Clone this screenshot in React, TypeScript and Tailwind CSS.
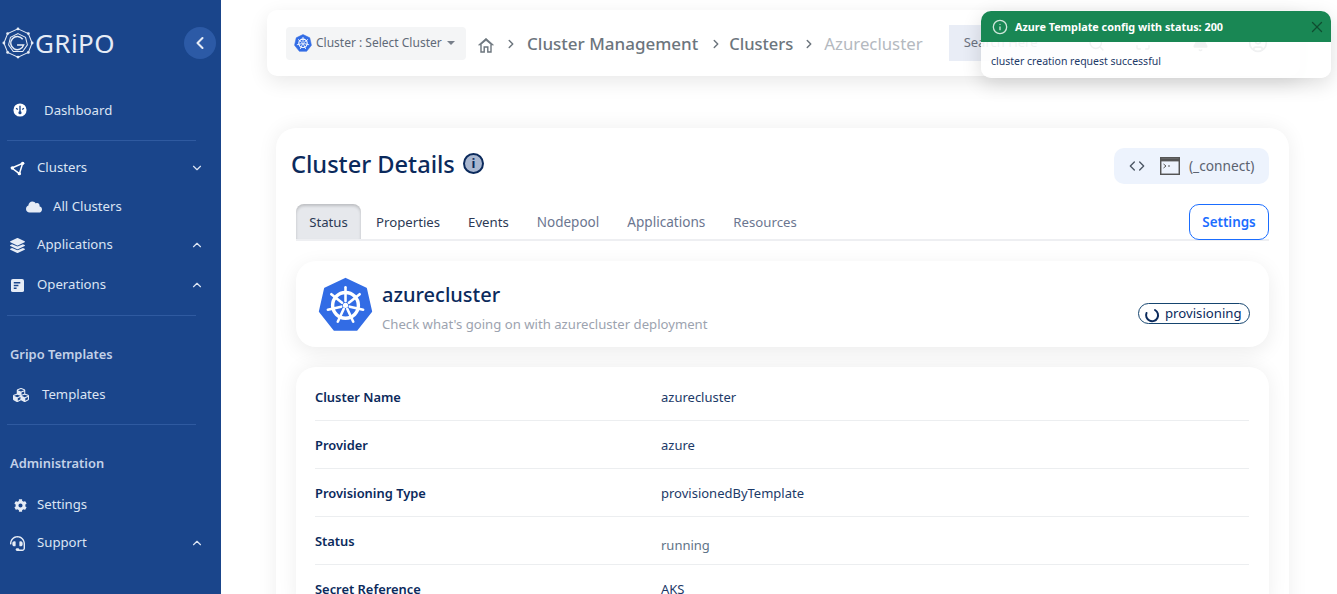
import { Search, Maximize, Bell, CircleUser, ChevronDown, ChevronUp, ChevronLeft, ChevronRight, X, Info, Code } from 'lucide-react';
import { FaCloud, FaCog, FaCubes, FaHeadset, FaLayerGroup } from 'react-icons/fa';

const KubeIcon = ({ className }: { className: string }) => (
    <svg viewBox="0 0 64 64" className={className}>
        <path d="M32 2 L56 13.5 L62 40 L45 61.5 L19 61.5 L2 40 L8 13.5 Z" fill="#326ce5" stroke="#326ce5" strokeWidth="2" strokeLinejoin="round" />
        <circle cx="32" cy="33" r="15" fill="none" stroke="#fff" strokeWidth="4" />
        <circle cx="32" cy="33" r="3" fill="#fff" />
        <g stroke="#fff" strokeWidth="3" strokeLinecap="round">
            <path d="M32 12 V28" />
            <path d="M48.5 20 L36 30" />
            <path d="M52.5 38 L37 34.5" />
            <path d="M41 52 L34 37" />
            <path d="M23 52 L30 37" />
            <path d="M11.5 38 L27 34.5" />
            <path d="M15.5 20 L28 30" />
        </g>
    </svg>
);

const GripoLogo = () => (
    <svg viewBox="0 0 34 34" className="w-[32px] h-[32px] shrink-0" fill="none" stroke="#e6ecf6" strokeWidth="1.1">
        <path d="M17 2 L28 7 L32 17 L28 27 L17 32 L6 27 L2 17 L6 7 Z" />
        <path d="M17 7 L25 11 L27 19 L22 26 L12 26 L7 19 L9 11 Z" />
        <path d="M22 13 A7 7 0 1 0 23 19 H16" strokeWidth="1.6" />
        {[[17, 2], [28, 7], [32, 17], [28, 27], [17, 32], [6, 27], [2, 17], [6, 7]].map(([x, y]) => (
            <circle key={`${x}-${y}`} cx={x} cy={y} r="1.5" fill="#e6ecf6" stroke="none" />
        ))}
    </svg>
);

const DashIcon = () => (
    <svg viewBox="0 0 16 16" className="w-[14px] h-[14px] shrink-0 -mt-[2px]">
        <circle cx="8" cy="8" r="7.5" fill="#fff" />
        <path d="M8 3 V10" stroke="#1a458b" strokeWidth="1.6" />
        <path d="M3.5 6 L5.5 7.5 M12.5 6 L10.5 7.5" stroke="#1a458b" strokeWidth="1.4" />
        <circle cx="8" cy="11" r="1.8" fill="#1a458b" />
    </svg>
);

const ClusterIcon = () => (
    <svg viewBox="0 0 16 16" className="w-[15px] h-[15px]" fill="none" stroke="#fff" strokeWidth="1.6">
        <path d="M2 7.5 L13.5 2.5 L10 13.5 Z" />
        <circle cx="2.5" cy="7.5" r="1.8" fill="#fff" stroke="none" />
        <circle cx="13.5" cy="2.5" r="1.8" fill="#fff" stroke="none" />
        <circle cx="10" cy="13.5" r="1.8" fill="#fff" stroke="none" />
    </svg>
);

const OperationsIcon = () => (
    <svg viewBox="0 0 14 14" className="w-[13px] h-[13px]">
        <rect width="14" height="14" rx="2" fill="#e6ecf6" />
        <path d="M3 4 H10 M3 7 H8 M3 10 H6" stroke="#1a458b" strokeWidth="1.5" />
    </svg>
);

const HomeIcon = () => (
    <svg viewBox="0 0 16 16" className="ml-[12px] mt-[3px] w-[16px] h-[16px] shrink-0" fill="none" stroke="#6c757d">
        <path d="M0.5 8 L8 1.2 L15.5 8 L13.5 8 L8 3.4 L2.5 8 Z" fill="#6c757d" strokeWidth="0.6" />
        <path d="M3 7.5 V15 H6.2 V10 H9.8 V15 H13 V7.5" strokeWidth="1.4" />
    </svg>
);

const Divider = () => <div className="h-px bg-[#2f5aa0] ml-[4px] w-[189px]" />;

function NavRow({ icon, label, chevron, pl, gap, h }: { icon: React.ReactNode; label: string; chevron?: 'up' | 'down'; pl: string; gap: string; h: string }) {
    return (
        <div className={`flex items-center ${pl} ${gap} ${h} text-[13.2px] text-[#dbe4f3] pr-[14px]`}>
            <span className="w-[16px] flex justify-center shrink-0">{icon}</span>
            <span>{label}</span>
            {chevron === 'down' && <ChevronDown className="ml-auto w-[14px] h-[14px] text-[#dbe4f3]" />}
            {chevron === 'up' && <ChevronUp className="ml-auto w-[14px] h-[14px] text-[#dbe4f3]" />}
        </div>
    );
}

const tabs = [
    { name: 'Properties', color: 'text-[#2c3a55]' },
    { name: 'Events', color: 'text-[#2c3a55]' },
    { name: 'Nodepool', color: 'text-[#6b7690] text-[13.5px]' },
    { name: 'Applications', color: 'text-[#6b7690] text-[13.6px]' },
    { name: 'Resources', color: 'text-[#6b7690] text-[13.2px]' },
];

const rows = [
    { label: 'Cluster Name', value: 'azurecluster' },
    { label: 'Provider', value: 'azure' },
    { label: 'Provisioning Type', value: 'provisionedByTemplate' },
    { label: 'Status', value: 'running' },
    { label: 'Secret Reference', value: 'AKS' },
];

export default function App() {
    return (
        <div className="relative flex h-[594px] w-[1337px] overflow-hidden bg-white font-['Noto_Sans',sans-serif]">
            {/* Sidebar */}
            <aside className="w-[221px] shrink-0 bg-[#1a458b] flex flex-col px-[3px]">
                <div className="flex items-center h-[32px] mt-[27px] -ml-[1px]">
                    <GripoLogo />
                    <span className="text-[26px] leading-none text-[#e6ecf6] tracking-[0.4px] ml-[1px]">GRiPO</span>
                    <span className="ml-auto mr-[2px] w-[32px] h-[32px] rounded-full bg-[#2c5aa6] flex items-center justify-center">
                        <ChevronLeft className="w-[20px] h-[20px] text-[#e6ecf6]" strokeWidth={2.5} />
                    </span>
                </div>
                <div className="mt-[33px] flex items-center h-[38px] pl-[10px] text-[13.2px] text-[#dbe4f3]">
                    <DashIcon />
                    <span className="ml-[17px]">Dashboard</span>
                </div>
                <div className="mt-[10px]"><Divider /></div>
                <div className="mt-[8px]">
                    <NavRow icon={<ClusterIcon />} label="Clusters" chevron="down" pl="pl-[6px]" gap="gap-[12px]" h="h-[38px]" />
                    <NavRow icon={<FaCloud className="w-[16px] h-[16px] text-[#e6ecf6]" />} label="All Clusters" pl="pl-[23px]" gap="gap-[11px]" h="h-[39px]" />
                    <NavRow icon={<FaLayerGroup className="w-[15px] h-[15px] text-[#e6ecf6]" />} label="Applications" chevron="up" pl="pl-[6px]" gap="gap-[12px]" h="h-[38px]" />
                    <NavRow icon={<OperationsIcon />} label="Operations" chevron="up" pl="pl-[6px]" gap="gap-[12px]" h="h-[42px]" />
                </div>
                <div className="mt-[9px]"><Divider /></div>
                <div className="mt-[29px] pl-[7px] h-[18px] leading-[18px] text-[12.9px] font-semibold text-[#c3d1e8]">Gripo Templates</div>
                <div className="mt-[13px] flex items-center h-[38px] pl-[10px] text-[13.2px] text-[#dbe4f3]">
                    <FaCubes className="w-[16px] h-[16px] shrink-0 text-[#e6ecf6]" />
                    <span className="ml-[13px]">Templates</span>
                </div>
                <div className="mt-[10px]"><Divider /></div>
                <div className="mt-[29px] pl-[7px] h-[18px] leading-[18px] text-[12.9px] font-semibold text-[#c3d1e8]">Administration</div>
                <div className="mt-[14px] flex items-center h-[38px] pl-[11px] text-[13.2px] text-[#dbe4f3]">
                    <FaCog className="w-[13px] h-[13px] shrink-0 text-[#e6ecf6]" />
                    <span className="ml-[10px]">Settings</span>
                </div>
                <NavRow icon={<FaHeadset className="w-[15px] h-[15px] text-[#e6ecf6]" />} label="Support" chevron="up" pl="pl-[6px]" gap="gap-[12px]" h="h-[38px]" />
            </aside>

            {/* Main */}
            <main className="flex-1 min-w-0 pl-[46px] pr-[37px] pt-[10px]">
                {/* Top bar */}
                <header className="h-[66px] bg-white rounded-[10px] shadow-[0_6px_20px_rgba(0,0,0,0.09)] flex items-center pl-[19px]">
                    <div className="h-[33px] w-[180px] shrink-0 rounded-[4px] bg-[#f4f5f6] flex items-center pl-[8px] text-[12px] text-[#5f6a78]">
                        <KubeIcon className="w-[18px] h-[18px] shrink-0" />
                        <span className="ml-[4px]">Cluster : Select Cluster</span>
                        <span className="ml-[5px] w-0 h-0 border-x-[4px] border-x-transparent border-t-[4px] border-t-[#777f8a]" />
                    </div>
                    <HomeIcon />
                    <ChevronRight className="ml-[10px] mt-[2px] w-[14px] h-[14px] shrink-0 text-[#6c757d]" strokeWidth={2.5} />
                    <span className="ml-[9px] mt-[2px] text-[17px] font-medium text-[#6c757d] whitespace-nowrap">Cluster Management</span>
                    <ChevronRight className="ml-[11px] mt-[2px] w-[14px] h-[14px] shrink-0 text-[#6c757d]" strokeWidth={2.5} />
                    <span className="ml-[6px] mt-[2px] text-[16.5px] font-medium text-[#6c757d]">Clusters</span>
                    <ChevronRight className="ml-[9px] mt-[2px] w-[14px] h-[14px] shrink-0 text-[#6c757d]" strokeWidth={2.5} />
                    <span className="ml-[8px] mt-[2px] text-[16.8px] text-[#b4b9bf]">Azurecluster</span>
                    <div className="ml-[26px] h-[36px] w-[131px] shrink-0 bg-[#e9edf6] flex items-center pl-[15px] text-[13px] text-[#6b7280]">Search Here</div>
                    <Search className="ml-[8px] w-[17px] h-[17px] shrink-0 text-[#6c757d]" />
                    <Maximize className="ml-[30px] w-[16px] h-[16px] shrink-0 text-[#6c757d]" />
                    <Bell className="ml-[41px] w-[17px] h-[17px] shrink-0 text-[#6c757d] fill-[#6c757d]" />
                    <CircleUser className="ml-[39px] w-[20px] h-[20px] shrink-0 text-[#6c757d]" />
                </header>

                {/* Details card */}
                <section className="mt-[52px] ml-[9px] mr-[11px] h-[600px] bg-white rounded-[20px] shadow-[0_0_20px_rgba(0,0,0,0.07)] px-[20px]">
                    <div className="flex items-start pt-[20px] -ml-[5px]">
                        <h1 className="text-[23.6px] leading-[33px] font-medium text-[#0b2a5c]">Cluster Details</h1>
                        <span className="ml-[8px] mt-[5px] w-[21px] h-[21px] rounded-full border-2 border-[#0b2a5c] bg-[#a9b7d0] flex items-center justify-center text-[13px] font-bold leading-none text-[#0b2a5c]">i</span>
                        <div className="ml-auto h-[36px] w-[155px] rounded-[10px] bg-[#edf3fd] flex items-center pl-[15px] text-[13.7px] text-[#5b6270]">
                            <Code className="w-[16px] h-[16px] text-[#4b5563]" />
                            <svg viewBox="0 0 20 18" className="ml-[15px] w-[20px] h-[18px]" fill="none" stroke="#555" strokeWidth="1.5">
                                <rect x="0.7" y="0.7" width="18.6" height="16.6" />
                                <path d="M0.7 2.8 H19.3" strokeWidth="3.2" />
                                <path d="M3.5 7 L6 9 L3.5 11 M8 9 H10" strokeWidth="1" />
                            </svg>
                            <span className="ml-[9px]">(_connect)</span>
                        </div>
                    </div>

                    <div className="mt-[20px] h-[37px] border-b-2 border-[#eeeff2] flex items-stretch text-[13.2px]">
                        <div className="w-[65px] rounded-t-[8px] bg-[#e6e8ec] shadow-[inset_0_2px_3px_rgba(0,0,0,0.18)] flex items-center justify-center pt-[2px] text-[#2c3a55]">Status</div>
                        <div className="flex items-center pl-[15px] pt-[2px] gap-[28px]">
                            {tabs.map((tab) => (
                                <span key={tab.name} className={tab.color}>{tab.name}</span>
                            ))}
                        </div>
                        <button className="ml-auto w-[80px] h-[36px] rounded-[10px] border border-[#1a6dff] text-[#1a6dff] font-semibold bg-white text-[13.4px]">Settings</button>
                    </div>

                    <div className="mt-[20px] h-[86px] rounded-[20px] bg-white shadow-[0_5px_20px_rgba(0,0,0,0.08)] flex items-center pl-[22px] pr-[19px]">
                        <KubeIcon className="w-[55px] h-[55px] shrink-0" />
                        <div className="ml-[9px] mt-[6px]">
                            <div className="text-[20px] leading-[27px] font-medium text-[#0b2a5c]">azurecluster</div>
                            <div className="mt-[7px] text-[13.15px] leading-[18px] text-[#9ca3af]">Check what's going on with azurecluster deployment</div>
                        </div>
                        <div className="ml-auto mt-[18px] h-[21px] w-[112px] rounded-full border border-[#16456f] flex items-center pl-[5px] text-[13.2px] text-[#0b2a5c]">
                            <svg viewBox="0 0 16 16" className="w-[16px] h-[16px] mt-[3px]" fill="none" stroke="#0b2a5c" strokeWidth="2" strokeLinecap="round">
                                <path d="M11 3 A6 6 0 1 1 2.5 6" />
                            </svg>
                            <span className="ml-[5px] mt-[1px]">provisioning</span>
                        </div>
                    </div>

                    <div className="mt-[20px] rounded-[20px] bg-white shadow-[0_0_20px_rgba(0,0,0,0.07)] pl-[19px] pr-[20px] pt-[6px]">
                        {rows.map((row) => (
                            <div key={row.label} className="h-[48px] border-b border-[#eceef0] flex items-center text-[13px] pt-[3px]">
                                <span className="w-[346px] font-semibold text-[12.9px] text-[#0b2a5c]">{row.label}</span>
                                <span className={row.value === 'running' ? 'text-[#5f7488] mt-[8px]' : 'text-[#1c3a68]'}>{row.value}</span>
                            </div>
                        ))}
                    </div>
                </section>
            </main>

            {/* Toast */}
            <div className="absolute left-[981px] top-[11px] w-[350px] h-[67px] rounded-[10px] overflow-hidden bg-white/90 shadow-[0_6px_20px_rgba(0,0,0,0.14)]">
                <div className="h-[31px] bg-[#198754] flex items-center pl-[11px] pr-[5px] pt-[1px] text-[10.8px] font-bold text-white">
                    <Info className="w-[16px] h-[16px] text-[#cfe6da]" />
                    <span className="ml-[7px]">Azure Template config with status: 200</span>
                    <X className="ml-auto w-[18px] h-[18px] text-[#0f4d30]" strokeWidth={1.75} />
                </div>
                <div className="pl-[10px] pt-[12px] text-[10.5px] leading-[15px] text-[#1c3a68]">cluster creation request successful</div>
            </div>
        </div>
    );
}
